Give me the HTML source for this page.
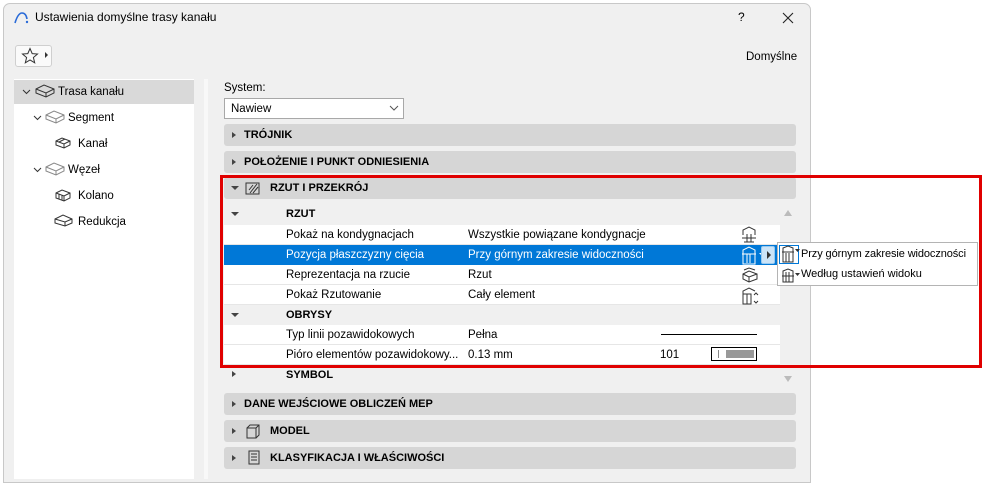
<!DOCTYPE html>
<html><head><meta charset="utf-8"><style>
*{margin:0;padding:0;box-sizing:border-box}
body{width:984px;height:468px;background:#fff;position:relative;overflow:hidden;font-family:"Segoe UI","Liberation Sans","DejaVu Sans",sans-serif;font-size:11.5px;color:#000;white-space:nowrap}
.a{position:absolute}
.dlg{left:3px;top:3px;width:808px;height:480px;background:#f0f0f0;border:1px solid #c8c8c8;border-radius:7px 7px 0 0}
.hd{background:#d6d6d6;border-radius:3px;height:22px;left:224px;width:572px;font-weight:bold;font-size:11px;line-height:23px}
.hd .t{position:absolute;left:8px;top:8px;width:0;height:0;border-left:4px solid #444;border-top:3.5px solid transparent;border-bottom:3.5px solid transparent}
.dn{position:absolute;left:7px;top:9px;width:0;height:0;border-top:4px solid #444;border-left:4px solid transparent;border-right:4px solid transparent}
.row{left:224px;width:556px;height:20px;line-height:21px;background:#fff;border-bottom:1px solid #e6e6e6}
.row .l{position:absolute;left:62px}
.row .v{position:absolute;left:244px}
.sub{left:224px;width:556px;height:20px;line-height:21px;background:#f0f0f0;font-weight:bold;font-size:11px}
.sub .l{position:absolute;left:62px}
.tr{font-size:11.5px;line-height:25px;height:24px}
</style></head><body>
<div class="a dlg"></div>
<svg class="a" style="left:13px;top:11px" width="16" height="14"><path d="M2 12 Q5 2 9 2 Q13 2 14 8" fill="none" stroke="#2a6bd8" stroke-width="1.6"/><circle cx="14" cy="11" r="1.2" fill="#2a6bd8"/></svg>
<div class="a" style="left:35px;top:10px;font-size:12px">Ustawienia domyślne trasy kanału</div>
<div class="a" style="left:738px;top:10px;font-size:12px">?</div>
<svg class="a" style="left:782px;top:12px" width="12" height="12"><path d="M1 1L11 11M11 1L1 11" stroke="#222" stroke-width="1.1"/></svg>
<div class="a" style="left:15px;top:45px;width:37px;height:22px;background:#fafafa;border:1px solid #cfcfcf;border-radius:3px"></div>
<svg class="a" style="left:21px;top:47px" width="18" height="18"><path d="M9 1.5L11.2 6.6 16.5 7 12.4 10.5 13.7 15.8 9 13 4.3 15.8 5.6 10.5 1.5 7 6.8 6.6Z" fill="none" stroke="#333" stroke-width="1"/></svg>
<div class="a" style="left:45px;top:52px;border-left:3px solid #333;border-top:3px solid transparent;border-bottom:3px solid transparent"></div>
<div class="a" style="left:746px;top:51px;font-size:11.5px">Domyślne</div>
<div class="a" style="left:14px;top:79px;width:180px;height:400px;background:#fff"></div>
<div class="a" style="left:14px;top:80px;width:180px;height:24px;background:#d9d9d9"></div>
<div class="a" style="left:204px;top:79px;width:4px;height:400px;background:#f8f8f8"></div>
<svg class="a" style="left:0;top:80px" width="194" height="160" font-size="0">
<g fill="none" stroke="#333" stroke-width="1">
<path d="M23 10l3.5 3.5 3.5-3.5"/>
<path d="M36 9l8-4 10 4v4l-8 4-10-4z M36 9l10 4 8-4 M46 13v4"/>
<path d="M34 36l3.5 3.5 3.5-3.5" />
<path d="M46 35l8-4 10 4v4l-8 4-10-4z M46 35l10 4 8-4 M56 39v4" stroke="#888"/>
<path d="M56 61l6-3 8 3v4l-6 3-8-3z M56 61l8 3 6-3 M64 64v4 M59 62l6-3"/>
<path d="M34 88l3.5 3.5 3.5-3.5"/>
<path d="M46 87l8-4 10 4v4l-8 4-10-4z M46 87l10 4 8-4 M56 91v4" stroke="#888"/>
<path d="M56 113l6-3 8 3v5l-6 3-8-3z M56 113l8 3 6-3 M64 116v5 M59 114v5 M62 115v5"/>
<path d="M55 139l8-4 9 4v4l-7 3-10-3z M55 139l10 3 7-3 M65 142v4"/>
</g></svg>
<div class="a tr" style="left:58px;top:80px">Trasa kanału</div>
<div class="a tr" style="left:68px;top:106px">Segment</div>
<div class="a tr" style="left:78px;top:132px">Kanał</div>
<div class="a tr" style="left:68px;top:158px">Węzeł</div>
<div class="a tr" style="left:78px;top:184px">Kolano</div>
<div class="a tr" style="left:78px;top:210px">Redukcja</div>
<div class="a" style="left:224px;top:82px">System:</div>
<div class="a" style="left:224px;top:98px;width:180px;height:21px;background:#fff;border:1px solid #a8a8a8;line-height:20px;padding-left:6px">Nawiew</div>
<svg class="a" style="left:389px;top:105px" width="10" height="6"><path d="M1 1l4 4 4-4" fill="none" stroke="#555"/></svg>
<div class="a hd" style="top:124px"><i class="t"></i><span style="position:absolute;left:20px">TRÓJNIK</span></div>
<div class="a hd" style="top:151px"><i class="t"></i><span style="position:absolute;left:20px">POŁOŻENIE I PUNKT ODNIESIENIA</span></div>
<div class="a hd" style="top:177px"><i class="dn"></i>
<svg style="position:absolute;left:21px;top:4px" width="16" height="15"><path d="M1 2h13v11H1z" fill="none" stroke="#333"/><path d="M5 12L12 3M8 12l5-6M4 9l4-5" stroke="#333"/></svg>
<span style="position:absolute;left:46px">RZUT I PRZEKRÓJ</span></div>
<div class="a" style="left:780px;top:204px;width:16px;height:184px;background:#f0f0f0"></div>
<div class="a" style="left:784px;top:210px;border-bottom:6px solid #bbb;border-left:4px solid transparent;border-right:4px solid transparent"></div>
<div class="a" style="left:784px;top:376px;border-top:6px solid #bbb;border-left:4px solid transparent;border-right:4px solid transparent"></div>
<div class="a sub" style="top:204px"><i class="dn" style="top:8px"></i><span class="l">RZUT</span></div>
<div class="a row" style="top:225px"><span class="l">Pokaż na kondygnacjach</span><span class="v">Wszystkie powiązane kondygnacje</span></div>
<div class="a row" style="top:245px;background:#0078d7;color:#fff;border-bottom-color:#0078d7"><span class="l">Pozycja płaszczyzny cięcia</span><span class="v">Przy górnym zakresie widoczności</span></div>
<div class="a row" style="top:265px"><span class="l">Reprezentacja na rzucie</span><span class="v">Rzut</span></div>
<div class="a row" style="top:285px"><span class="l">Pokaż Rzutowanie</span><span class="v">Cały element</span></div>
<div class="a sub" style="top:305px"><i class="dn" style="top:8px"></i><span class="l">OBRYSY</span></div>
<div class="a row" style="top:325px"><span class="l">Typ linii pozawidokowych</span><span class="v">Pełna</span></div>
<div class="a row" style="top:345px"><span class="l">Pióro elementów pozawidokowy...</span><span class="v">0.13 mm</span><span style="position:absolute;left:436px">101</span></div>
<div class="a sub" style="top:365px"><i style="position:absolute;left:8px;top:6px;border-left:4px solid #444;border-top:3.5px solid transparent;border-bottom:3.5px solid transparent"></i><span class="l">SYMBOL</span></div>
<div class="a" style="left:661px;top:334px;width:96px;height:1px;background:#000"></div>
<div class="a" style="left:711px;top:347px;width:46px;height:14px;border:1px solid #000;background:#fff"></div>
<div class="a" style="left:718px;top:350px;width:1px;height:8px;background:#888"></div>
<div class="a" style="left:726px;top:350px;width:28px;height:8px;background:#999"></div>
<svg class="a" style="left:740px;top:226px" width="40" height="80" font-size="0"><g fill="none" stroke="#333" stroke-width="1">
<path d="M3 9V4l6-3 6 3v5 M2 12h14 M7 8v8 M11 8v8 M4 16h10"/>
</g><g fill="none" stroke="#fff" stroke-width="1">
<path d="M3 28V24l6-3 6 3v14H3z M2 28h14 M7 28v9 M10 28v9"/></g>
<path d="M19 27h6l-3 3z" fill="#fff"/>
<g fill="none" stroke="#333" stroke-width="1">
<path d="M4 44l5-2 6 2 M3 48l6-3 8 3v5l-8 3-6-3z M3 48l6 3 8-3 M9 51v5"/>
<path d="M3 69V65l6-3 6 3 M3 68h8v10H3z M7 68v10 M14 69l2-2 2 2 M14 75l2 2 2-2"/>
</g></svg>
<div class="a" style="left:761px;top:246px;width:14px;height:18px;background:#cce4f7;border:1px solid #99c9ef;border-radius:2px"></div>
<div class="a" style="left:767px;top:251px;border-left:4px solid #333;border-top:4px solid transparent;border-bottom:4px solid transparent"></div>
<div class="a" style="left:777px;top:242px;width:201px;height:44px;background:#fff;border:1px solid #b4b4b4"></div>
<div class="a" style="left:779px;top:245px;width:20px;height:19px;border:1px solid #0078d7"></div>
<svg class="a" style="left:780px;top:245px" width="22" height="40"><g fill="none" stroke="#333" stroke-width="1"><path d="M3 6V3l5-2 5 2v14H3z M2 7h12 M6 8v9 M9 8v9"/><path d="M3 30V26l5-2 5 2v11H3z M2 31h12 M6 27v10 M9 27v10"/></g><path d="M15 4h5l-2.5 3z M15 28h5l-2.5 3z" fill="#333"/></svg>
<div class="a" style="left:801px;top:248px;font-size:11px;letter-spacing:-0.1px">Przy górnym zakresie widoczności</div>
<div class="a" style="left:801px;top:268px;font-size:11px">Według ustawień widoku</div>
<div class="a hd" style="top:393px"><i class="t"></i><span style="position:absolute;left:20px">DANE WEJŚCIOWE OBLICZEŃ MEP</span></div>
<div class="a hd" style="top:420px"><i class="t"></i>
<svg style="position:absolute;left:22px;top:4px" width="14" height="15"><path d="M1 4h9v10H1z M1 4l3-3h9v10l-3 3 M10 4l3-3" fill="none" stroke="#333"/></svg>
<span style="position:absolute;left:46px">MODEL</span></div>
<div class="a hd" style="top:447px"><i class="t"></i>
<svg style="position:absolute;left:24px;top:3px" width="12" height="15"><path d="M1 1h10v13H1z M3 4h6M3 7h6M3 10h6" fill="none" stroke="#333"/></svg>
<span style="position:absolute;left:46px">KLASYFIKACJA I WŁAŚCIWOŚCI</span></div>
<div class="a" style="left:220px;top:175px;width:762px;height:193px;border:3px solid #e00000"></div>
</body></html>
